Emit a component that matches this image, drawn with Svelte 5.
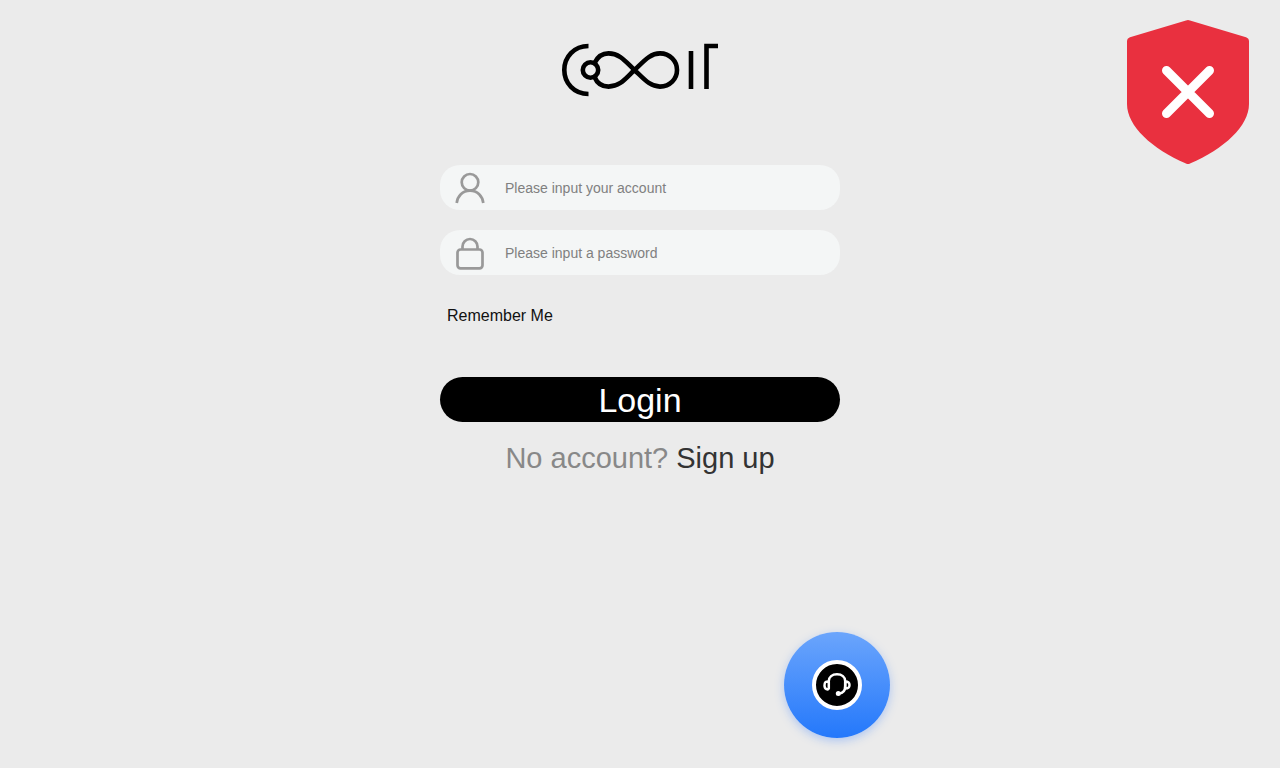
<script lang="ts">
  let account = $state('');
  let password = $state('');
  let remember = $state(false);
</script>

<main class="page">
  <svg class="logo" viewBox="0 0 160 56" role="img" aria-label="Logo">
    <g fill="none" stroke="#000" stroke-width="4.6">
      <path d="M28.500 4C14 4 4.300 15 4.300 28S14 52 28.500 52" />
      <circle cx="30.500" cy="28" r="7.700" />
      <path d="M34.500 21C38 14 43 11.400 48.500 11.400C60 11.400 66 20 74.500 28C84 37 90 44.600 100 44.600C110 44.600 117 37 117 28S110 11.400 100 11.400C90 11.400 84 19 74.500 28C66 36 60 44.600 48.500 44.600C42 44.600 37 41 34.500 35" />
      <path d="M131 9V47M146.500 47V4H158" />
    </g>
  </svg>

  <form class="login" onsubmit={(e) => e.preventDefault()}>
    <label class="field">
      <svg viewBox="0 0 30 36" aria-hidden="true">
        <circle cx="15" cy="12.300" r="8.300" />
        <path d="M1.700 33C2.500 26 7.500 20.600 15 20.600S27.500 26 28.300 33" />
      </svg>
      <input type="text" bind:value={account} placeholder="Please input your account" aria-label="Account" />
    </label>
    <label class="field">
      <svg viewBox="0 0 30 36" aria-hidden="true">
        <path d="M7.500 14.500V11.500a7.500 7.500 0 0 1 15 0v3" />
        <rect x="2.500" y="14.500" width="25" height="18.800" rx="3" />
      </svg>
      <input type="password" bind:value={password} placeholder="Please input a password" aria-label="Password" />
    </label>

    <label class="remember">
      <input type="checkbox" bind:checked={remember} />
      Remember Me
    </label>

    <button class="submit" type="submit">Login</button>
  </form>

  <p class="signup">No account? <a href="#signup">Sign up</a></p>
</main>

<svg class="shield" viewBox="0 0 122 144" role="img" aria-label="Blocked">
  <path
    fill="#e9303f"
    d="M59 .500Q61 -.500 63 .500L119 17.300Q122 18.300 122 21.500V84C122 106 97 129 63 143.500Q61 144.500 59 143.500C25 129 0 106 0 84V21.500Q0 18.300 3 17.300Z"
  />
  <path d="M39.500 50.500L82.500 93.500M82.500 50.500L39.500 93.500" stroke="#fff" stroke-width="9" stroke-linecap="round" />
</svg>

<button class="support" type="button" aria-label="Customer service">
  <svg viewBox="0 0 50 50" aria-hidden="true">
    <circle cx="25" cy="25" r="23" fill="#000" stroke="#fff" stroke-width="4" />
    <g fill="none" stroke="#fff" stroke-width="2.500" stroke-linecap="round" stroke-linejoin="round">
      <path d="M16.800 21C17 17 20 14.300 25 14.300S33 17 33.200 21V26C33.200 31 31 33.300 27 33.600" />
      <path d="M16.800 21.500V28.500C16 30 12.500 29.500 12.500 25.500S14 21.500 16.800 21.500Z" />
      <path d="M33.200 21.500V28.500C36 28.500 37.500 28 37.500 25S36 21.500 33.200 21.500Z" />
    </g>
    <circle cx="26.300" cy="33.600" r="2.500" fill="#fff" />
  </svg>
</button>

<style>
  :global(body) {
    margin: 0;
    background: #ebebeb;
    font-family: 'Liberation Sans', Arial, sans-serif;
  }

  .page {
    display: flex;
    flex-direction: column;
    align-items: center;
    padding: 42px 20px;
  }

  .logo {
    width: 160px;
    height: 56px;
  }

  .login {
    display: flex;
    flex-direction: column;
    width: 100%;
    max-width: 400px;
    margin-top: 67px;
  }

  .field {
    display: flex;
    align-items: center;
    gap: 20px;
    height: 45px;
    margin-bottom: 20px;
    padding: 0 15px;
    border-radius: 20px;
    background: #f4f6f6;
  }

  .field svg {
    flex: none;
    width: 30px;
    height: 36px;
    fill: none;
    stroke: #999;
    stroke-width: 2.7;
  }

  .field input {
    flex: 1;
    min-width: 0;
    padding: 0;
    border: 0;
    outline: none;
    background: none;
    font: 14px 'Liberation Sans', Arial, sans-serif;
    color: #333;
  }

  .field input::placeholder {
    color: #808080;
    opacity: 1;
  }

  .remember {
    align-self: flex-start;
    margin-top: 10px;
    padding-left: 7px;
    font-size: 16px;
    line-height: 22px;
    color: #111;
    cursor: pointer;
  }

  .remember input {
    position: absolute;
    appearance: none;
    width: 0;
    height: 0;
    margin: 0;
  }

  .submit {
    height: 45px;
    margin-top: 50px;
    padding: 2px 0 0;
    border: 0;
    border-radius: 23px;
    background: #000;
    color: #fff;
    font: 34px 'Liberation Sans', Arial, sans-serif;
    cursor: pointer;
  }

  .signup {
    margin: 18px 0 0;
    font-size: 29px;
    line-height: 36px;
    color: #888;
  }

  .signup a {
    color: #333;
    text-decoration: none;
  }

  .shield {
    position: fixed;
    top: 20px;
    right: 31px;
    width: 122px;
    height: 144px;
  }

  .support {
    position: fixed;
    bottom: 30px;
    left: calc(50% + 144px);
    display: flex;
    align-items: center;
    justify-content: center;
    width: 106px;
    height: 106px;
    padding: 0;
    border: 0;
    border-radius: 50%;
    background: linear-gradient(#6ba5fc, #2478fb);
    box-shadow: 0 3px 10px rgba(60, 130, 255, 0.35);
    cursor: pointer;
  }

  .support svg {
    width: 50px;
    height: 50px;
  }
</style>
